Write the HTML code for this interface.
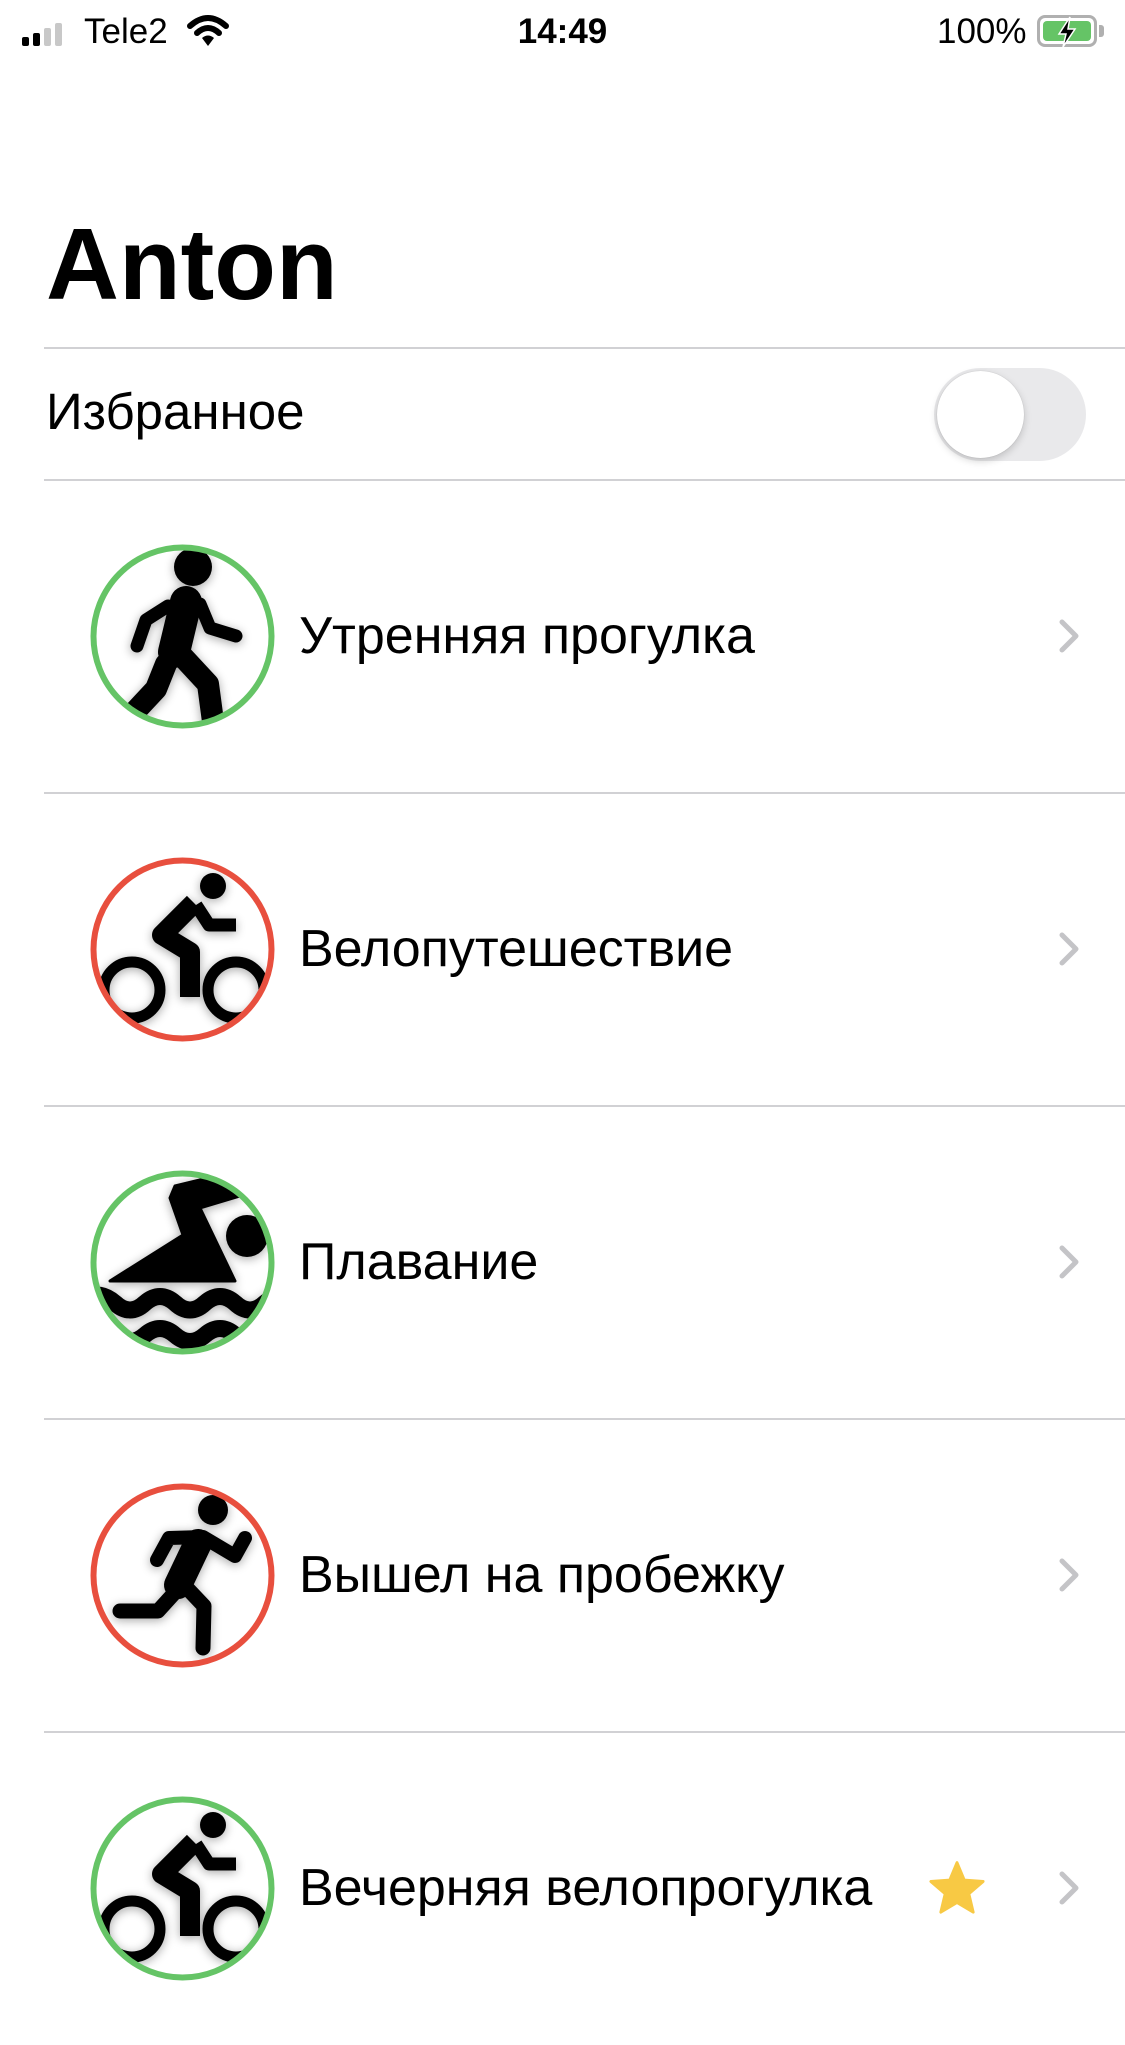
<!DOCTYPE html>
<html><head><meta charset="utf-8"><style>
*{margin:0;padding:0;box-sizing:border-box}
body{width:1125px;height:2001px;background:#fff;font-family:"Liberation Sans",sans-serif;position:relative;overflow:hidden;color:#000}
.abs{position:absolute}
.sep{position:absolute;left:44px;right:0;height:2px;background:#d1d1d4}
.row{position:absolute;left:0;width:1125px;height:313px}
.ic{position:absolute;left:90px;width:185px;height:185px;top:64px}
.lbl{position:absolute;left:299px;top:0;height:313px;line-height:313px;font-size:52px}
.chev{position:absolute;left:1058px;top:138px}
</style></head><body>
<!-- status bar -->
<div class="abs" style="left:22px;top:30px;width:48px;height:16px">
<div class="abs" style="left:0;top:7px;width:7px;height:9px;background:#000;border-radius:2px"></div>
<div class="abs" style="left:11px;top:3px;width:7px;height:13px;background:#000;border-radius:2px"></div>
<div class="abs" style="left:22px;top:-2px;width:7px;height:18px;background:#c8c8c8;border-radius:2px"></div>
<div class="abs" style="left:33px;top:-7px;width:7px;height:23px;background:#c8c8c8;border-radius:2px"></div>
</div>
<div class="abs" style="left:84px;top:12px;font-size:35px;line-height:40px">Tele2</div>
<svg class="abs" style="left:186px;top:14px" width="44" height="34" viewBox="0 0 44 34"><path d="M4 12 Q22 -4 40 12" stroke="#000" stroke-width="6" fill="none" stroke-linecap="round"/><path d="M11 19 Q22 9 33 19" stroke="#000" stroke-width="6" fill="none" stroke-linecap="round"/><path d="M16 24 L22 32 L28 24 Q22 19 16 24Z" fill="#000"/></svg>
<div class="abs" style="left:0;width:1125px;top:12px;text-align:center;font-size:35px;line-height:40px;font-weight:bold">14:49</div>
<div class="abs" style="left:937px;top:12px;font-size:35px;line-height:40px">100%</div>
<div class="abs" style="left:1037px;top:15px;width:60px;height:32px;border:3px solid #b0b0b0;border-radius:8px;padding:3px"><div style="width:100%;height:100%;background:#65c466;border-radius:4px"></div></div>
<div class="abs" style="left:1099px;top:25px;width:5px;height:12px;background:#b0b0b0;border-radius:0 3px 3px 0"></div>
<svg class="abs" style="left:1054px;top:16px" width="26" height="32" viewBox="0 0 26 32"><path d="M16 1 L5 18 H12 L9 31 L21 13 H14Z" fill="#000" stroke="#fff" stroke-width="1.5"/></svg>

<div class="abs" style="left:46px;top:210px;font-size:101px;font-weight:bold;line-height:110px">Anton</div>
<div class="sep" style="top:347px"></div>
<div class="abs" style="left:46px;top:384px;font-size:51px;line-height:56px">Избранное</div>
<div class="abs" style="left:934px;top:368px;width:152px;height:93px;border-radius:47px;background:#e9e9eb"></div>
<div class="abs" style="left:937px;top:371px;width:87px;height:87px;border-radius:50%;background:#fff;box-shadow:0 3px 8px rgba(0,0,0,.18),0 0 1px rgba(0,0,0,.2)"></div>
<div class="sep" style="top:479px"></div>

<svg width="0" height="0" style="position:absolute"><defs>
<clipPath id="cc"><circle cx="92.5" cy="92.5" r="90"/></clipPath>
<filter id="sh" x="-30%" y="-30%" width="160%" height="160%"><feGaussianBlur in="SourceAlpha" stdDeviation="5"/><feOffset dy="2"/><feComponentTransfer><feFuncA type="linear" slope="0.35"/></feComponentTransfer><feMerge><feMergeNode/><feMergeNode in="SourceGraphic"/></feMerge></filter>
<g id="chevr"><path d="M4 4 L18 18 L4 32" stroke="#c4c4c7" stroke-width="5" fill="none" stroke-linecap="round" stroke-linejoin="round"/></g>
</defs></svg>

<!-- row 1 walk -->
<div class="row" style="top:480px">
<svg class="ic" viewBox="0 0 185 185"><g clip-path="url(#cc)"><g filter="url(#sh)" fill="#000" stroke="#000" stroke-linecap="round" stroke-linejoin="round">
<circle cx="103" cy="23" r="19" stroke="none"/>
<path d="M96 58 L84 108" stroke-width="32" fill="none"/>
<path d="M78 62 L56 76 L47 102" stroke-width="13" fill="none"/>
<path d="M110 60 L120 84 L146 92" stroke-width="13" fill="none"/>
<path d="M92 112 L118 140 L124 185" stroke-width="22" fill="none"/>
<path d="M76 120 L66 145 L38 175" stroke-width="22" fill="none"/>
</g></g><circle cx="92.5" cy="92.5" r="89" fill="none" stroke="#65c466" stroke-width="6"/></svg>
<div class="lbl">Утренняя прогулка</div>
<svg class="chev" width="24" height="36"><use href="#chevr"/></svg>
</div>
<div class="sep" style="top:792px"></div>

<!-- row 2 bike -->
<div class="row" style="top:793px">
<svg class="ic" viewBox="0 0 185 185"><g clip-path="url(#cc)"><g filter="url(#sh)" fill="none" stroke="#000" stroke-linejoin="round">
<circle cx="123" cy="29" r="13" fill="#000" stroke="none"/>
<path d="M104 46 L72 78 L100 95 L100 140" stroke-width="20"/>
<path d="M106 48 L119 68 L146 68" stroke-width="13"/>
<circle cx="42" cy="133" r="28" stroke-width="11"/>
<circle cx="146" cy="133" r="28" stroke-width="11"/>
</g></g><circle cx="92.5" cy="92.5" r="89" fill="none" stroke="#e84f3e" stroke-width="6"/></svg>
<div class="lbl">Велопутешествие</div>
<svg class="chev" width="24" height="36"><use href="#chevr"/></svg>
</div>
<div class="sep" style="top:1105px"></div>

<!-- row 3 swim -->
<div class="row" style="top:1106px">
<svg class="ic" viewBox="0 0 185 185"><g clip-path="url(#cc)"><g filter="url(#sh)">
<circle cx="157" cy="66" r="21" fill="#000"/>
<path d="M20 111 L93 65 L80 28 L85 16 L118 8 L150 26 L110 38 L145 111 Z" fill="#000" stroke="#000" stroke-width="3" stroke-linejoin="round"/>
<path d="M-5 128 Q10 120 25 133 Q40 147 55 133 Q70 120 85 133 Q100 147 115 133 Q130 120 145 133 Q160 147 175 133 Q185 124 195 130" stroke="#000" stroke-width="17" fill="none"/>
<path d="M-5 165 Q10 152 25 165 Q40 178 55 165 Q70 152 85 165 Q100 178 115 165 Q130 152 145 165 Q160 178 175 165 Q185 156 195 162" stroke="#000" stroke-width="17" fill="none"/>
<path d="M40 200 Q55 187 70 198" stroke="#000" stroke-width="17" fill="none"/>
</g></g><circle cx="92.5" cy="92.5" r="89" fill="none" stroke="#65c466" stroke-width="6"/></svg>
<div class="lbl">Плавание</div>
<svg class="chev" width="24" height="36"><use href="#chevr"/></svg>
</div>
<div class="sep" style="top:1418px"></div>

<!-- row 4 run -->
<div class="row" style="top:1419px">
<svg class="ic" viewBox="0 0 185 185"><g clip-path="url(#cc)"><g filter="url(#sh)" fill="none" stroke="#000" stroke-linecap="round" stroke-linejoin="round">
<circle cx="123" cy="27" r="15" fill="#000" stroke="none"/>
<path d="M67 77 L79 55 L113 54 L145 73 L155 55" stroke-width="14"/>
<path d="M108 60 L88 102" stroke-width="28"/>
<path d="M88 106 L68 128 L30 128" stroke-width="15"/>
<path d="M96 104 L114 123 L113 165" stroke-width="15"/>
</g></g><circle cx="92.5" cy="92.5" r="89" fill="none" stroke="#e84f3e" stroke-width="6"/></svg>
<div class="lbl">Вышел на пробежку</div>
<svg class="chev" width="24" height="36"><use href="#chevr"/></svg>
</div>
<div class="sep" style="top:1731px"></div>

<!-- row 5 bike evening -->
<div class="row" style="top:1732px">
<svg class="ic" viewBox="0 0 185 185"><g clip-path="url(#cc)"><g filter="url(#sh)" fill="none" stroke="#000" stroke-linejoin="round">
<circle cx="123" cy="29" r="13" fill="#000" stroke="none"/>
<path d="M104 46 L72 78 L100 95 L100 140" stroke-width="20"/>
<path d="M106 48 L119 68 L146 68" stroke-width="13"/>
<circle cx="42" cy="133" r="28" stroke-width="11"/>
<circle cx="146" cy="133" r="28" stroke-width="11"/>
</g></g><circle cx="92.5" cy="92.5" r="89" fill="none" stroke="#65c466" stroke-width="6"/></svg>
<div class="lbl">Вечерняя велопрогулка</div>
<svg class="abs" style="left:928px;top:128px" width="58" height="56" viewBox="0 0 24 23"><path d="M12 1 L15 8.2 L22.8 8.8 L16.9 13.9 L18.7 21.5 L12 17.5 L5.3 21.5 L7.1 13.9 L1.2 8.8 L9 8.2Z" fill="#f8c944" stroke="#f8c944" stroke-width="1.2" stroke-linejoin="round"/></svg>
<svg class="chev" width="24" height="36"><use href="#chevr"/></svg>
</div>
</body></html>
